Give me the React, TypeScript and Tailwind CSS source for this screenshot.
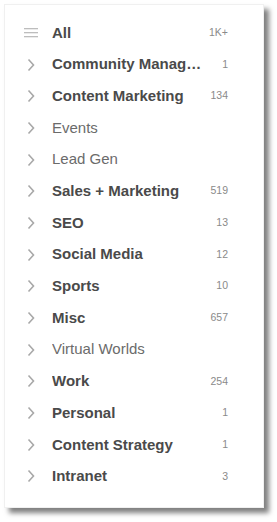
import React from 'react';

type Item = { name: string; count?: string; bold: boolean };

const items: Item[] = [
  { name: 'Community Management', count: '1', bold: true },
  { name: 'Content Marketing', count: '134', bold: true },
  { name: 'Events', bold: false },
  { name: 'Lead Gen', bold: false },
  { name: 'Sales + Marketing', count: '519', bold: true },
  { name: 'SEO', count: '13', bold: true },
  { name: 'Social Media', count: '12', bold: true },
  { name: 'Sports', count: '10', bold: true },
  { name: 'Misc', count: '657', bold: true },
  { name: 'Virtual Worlds', bold: false },
  { name: 'Work', count: '254', bold: true },
  { name: 'Personal', count: '1', bold: true },
  { name: 'Content Strategy', count: '1', bold: true },
  { name: 'Intranet', count: '3', bold: true },
];

function Chevron() {
  return (
    <svg width="8" height="14" viewBox="0 0 8 14" className="shrink-0">
      <path d="M1.5 1.5 L6.5 7 L1.5 12.5" fill="none" stroke="#a8a8a8" strokeWidth="1.6" />
    </svg>
  );
}

function Hamburger() {
  return (
    <svg width="14" height="10" viewBox="0 0 14 10" className="shrink-0">
      <rect x="0" y="0" width="14" height="1.3" fill="#bdbdbd" />
      <rect x="0" y="4" width="14" height="1.3" fill="#bdbdbd" />
      <rect x="0" y="8" width="14" height="1.3" fill="#bdbdbd" />
    </svg>
  );
}

function Row({ icon, name, count, bold }: { icon: React.ReactNode; name: string; count?: string; bold: boolean }) {
  return (
    <div className="flex items-center h-[31.7px]">
      <div className="w-[20px] flex justify-center">{icon}</div>
      <div
        className={
          'ml-[11px] w-[153px] truncate text-[15px] ' +
          (bold ? 'font-bold text-[#4a4a4a]' : 'font-normal text-[#6b6b6b]')
        }
      >
        {name}
      </div>
      <div className="ml-auto mr-[35px] text-[10.5px] text-[#8a8a8a]">{count}</div>
    </div>
  );
}

export default function App() {
  return (
    <div className="w-[277px] h-[522px] bg-white pt-[4px] pl-[4px]" style={{ fontFamily: '"Liberation Sans", Arial, sans-serif' }}>
      <div className="w-[260px] h-[504px] bg-white border border-[#f0f0f0] shadow-[5px_5px_5px_rgba(0,0,0,0.5)] pt-[12px] pl-[16px]">
        <Row icon={<Hamburger />} name="All" count="1K+" bold />
        {items.map((it) => (
          <Row key={it.name} icon={<Chevron />} name={it.name} count={it.count} bold={it.bold} />
        ))}
      </div>
    </div>
  );
}
